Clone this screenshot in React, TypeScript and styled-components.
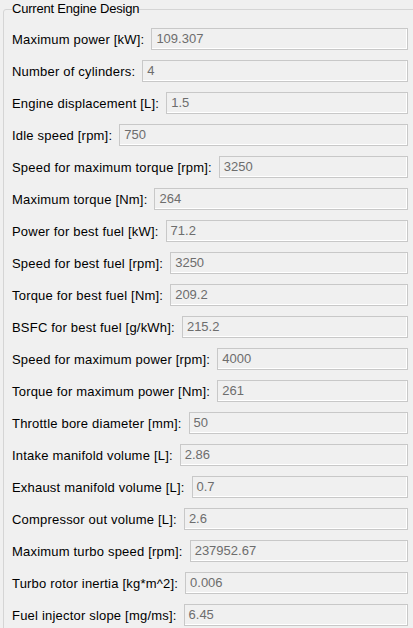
import styled, { createGlobalStyle } from "styled-components";

const GlobalStyle = createGlobalStyle`
  html, body {
    margin: 0;
    padding: 0;
    background: #f0f0f0;
    overflow: hidden;
  }
`;

interface Param {
  label: string;
  value: string;
}

const params: Param[] = [
  { label: "Maximum power [kW]:", value: "109.307" },
  { label: "Number of cylinders:", value: "4" },
  { label: "Engine displacement [L]:", value: "1.5" },
  { label: "Idle speed [rpm]:", value: "750" },
  { label: "Speed for maximum torque [rpm]:", value: "3250" },
  { label: "Maximum torque [Nm]:", value: "264" },
  { label: "Power for best fuel [kW]:", value: "71.2" },
  { label: "Speed for best fuel [rpm]:", value: "3250" },
  { label: "Torque for best fuel [Nm]:", value: "209.2" },
  { label: "BSFC for best fuel [g/kWh]:", value: "215.2" },
  { label: "Speed for maximum power [rpm]:", value: "4000" },
  { label: "Torque for maximum power [Nm]:", value: "261" },
  { label: "Throttle bore diameter [mm]:", value: "50" },
  { label: "Intake manifold volume [L]:", value: "2.86" },
  { label: "Exhaust manifold volume [L]:", value: "0.7" },
  { label: "Compressor out volume [L]:", value: "2.6" },
  { label: "Maximum turbo speed [rpm]:", value: "237952.67" },
  { label: "Turbo rotor inertia [kg*m^2]:", value: "0.006" },
  { label: "Fuel injector slope [mg/ms]:", value: "6.45" },
];

const App = () => {
  return (
    <>
      <GlobalStyle />
      <Page>
        <Group>
          <Legend>Current Engine Design</Legend>
          <Rows>
            {params.map((p) => (
              <Row key={p.label}>
                <Label>{p.label}</Label>
                <Field>{p.value}</Field>
              </Row>
            ))}
          </Rows>
        </Group>
      </Page>
    </>
  );
};

export default App;

const Page = styled.div`
  width: 413px;
  height: 628px;
  overflow: hidden;
  padding: 1px 0 0 3px;
  box-sizing: border-box;
  font-family: "Liberation Sans", Arial, sans-serif;
  font-size: 13px;
  color: #000;
`;

const Group = styled.fieldset`
  margin: 0;
  width: 420px;
  box-sizing: border-box;
  border: 1px solid #d5d5d5;
  border-radius: 3px;
  padding: 0 14px 20px 8px;
`;

const Legend = styled.legend`
  padding: 0;
  margin-left: 0;
  line-height: 16px;
  letter-spacing: -0.2px;
  color: #000;
`;

const Rows = styled.div`
  display: flex;
  flex-direction: column;
  gap: 10px;
  padding-top: 11px;
`;

const Row = styled.div`
  display: flex;
  align-items: center;
  gap: 7px;
  height: 22px;
`;

const Label = styled.span`
  white-space: nowrap;
  letter-spacing: 0.2px;
`;

const Field = styled.div`
  flex: 1;
  height: 22px;
  box-sizing: border-box;
  border: 1px solid #c8c8c8;
  box-shadow: inset -1px -1px 0 #ffffff;
  padding: 0 4px;
  line-height: 20px;
  color: #6d6d6d;
  white-space: nowrap;
`;
